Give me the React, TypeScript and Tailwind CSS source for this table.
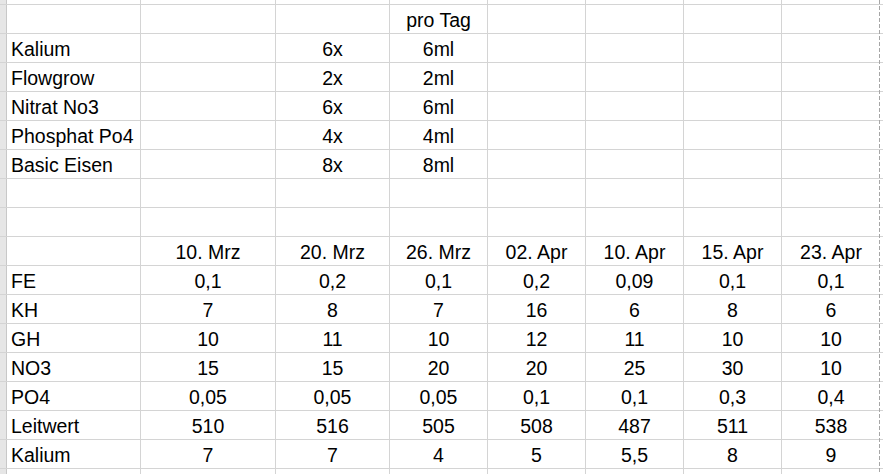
const cols = [
  "w-[134px]",
  "w-[135px]",
  "w-[114px]",
  "w-[98px]",
  "w-[98px]",
  "w-[98px]",
  "w-[98px]",
  "w-[98px]",
];

type Row = { cells: string[]; left?: boolean };

const blank = (): string[] => ["", "", "", "", "", "", "", ""];

const rows: string[][] = [
  ["", "", "", "pro Tag", "", "", "", ""],
  ["Kalium", "", "6x", "6ml", "", "", "", ""],
  ["Flowgrow", "", "2x", "2ml", "", "", "", ""],
  ["Nitrat No3", "", "6x", "6ml", "", "", "", ""],
  ["Phosphat Po4", "", "4x", "4ml", "", "", "", ""],
  ["Basic Eisen", "", "8x", "8ml", "", "", "", ""],
  blank(),
  blank(),
  ["", "10. Mrz", "20. Mrz", "26. Mrz", "02. Apr", "10. Apr", "15. Apr", "23. Apr"],
  ["FE", "0,1", "0,2", "0,1", "0,2", "0,09", "0,1", "0,1"],
  ["KH", "7", "8", "7", "16", "6", "8", "6"],
  ["GH", "10", "11", "10", "12", "11", "10", "10"],
  ["NO3", "15", "15", "20", "20", "25", "30", "10"],
  ["PO4", "0,05", "0,05", "0,05", "0,1", "0,1", "0,3", "0,4"],
  ["Leitwert", "510", "516", "505", "508", "487", "511", "538"],
  ["Kalium", "7", "7", "4", "5", "5,5", "8", "9"],
];

function GridRow({ cells, h }: { cells: string[]; h: string }) {
  return (
    <div className={`flex ${h} border-b border-[#d4d4d4]`}>
      <div className="w-[7px] shrink-0 bg-[#e6e6e6] border-r border-[#c8c8c8]" />
      {cols.map((w, i) => (
        <div
          key={i}
          className={`${w} shrink-0 flex items-end pb-[3px] leading-none ${
            i === 7 ? "" : "border-r border-[#d4d4d4]"
          } ${i === 0 ? "justify-start pl-[4px]" : "justify-center"}`}
        >
          {cells[i]}
        </div>
      ))}
      <div className="flex-1" />
    </div>
  );
}

export default function App() {
  return (
    <div className="relative w-[883px] h-[474px] overflow-hidden bg-white text-black text-[19.5px] font-['Liberation_Sans',Arial,sans-serif]">
      <GridRow cells={blank()} h="h-[5px]" />
      {rows.map((r, i) => (
        <GridRow key={i} cells={r} h="h-[29px]" />
      ))}
      <div className="flex h-[10px]">
        <div className="w-[7px] shrink-0 bg-[#e6e6e6] border-r border-[#c8c8c8]" />
        {cols.map((w, i) => (
          <div
            key={i}
            className={`${w} shrink-0 ${i === 7 ? "" : "border-r border-[#d4d4d4]"}`}
          />
        ))}
      </div>
      {/* page break */}
      <div className="absolute top-0 bottom-0 left-[879px] w-px bg-[repeating-linear-gradient(to_bottom,#a6a6a6_0px,#a6a6a6_4px,transparent_4px,transparent_6px)]" />
    </div>
  );
}
